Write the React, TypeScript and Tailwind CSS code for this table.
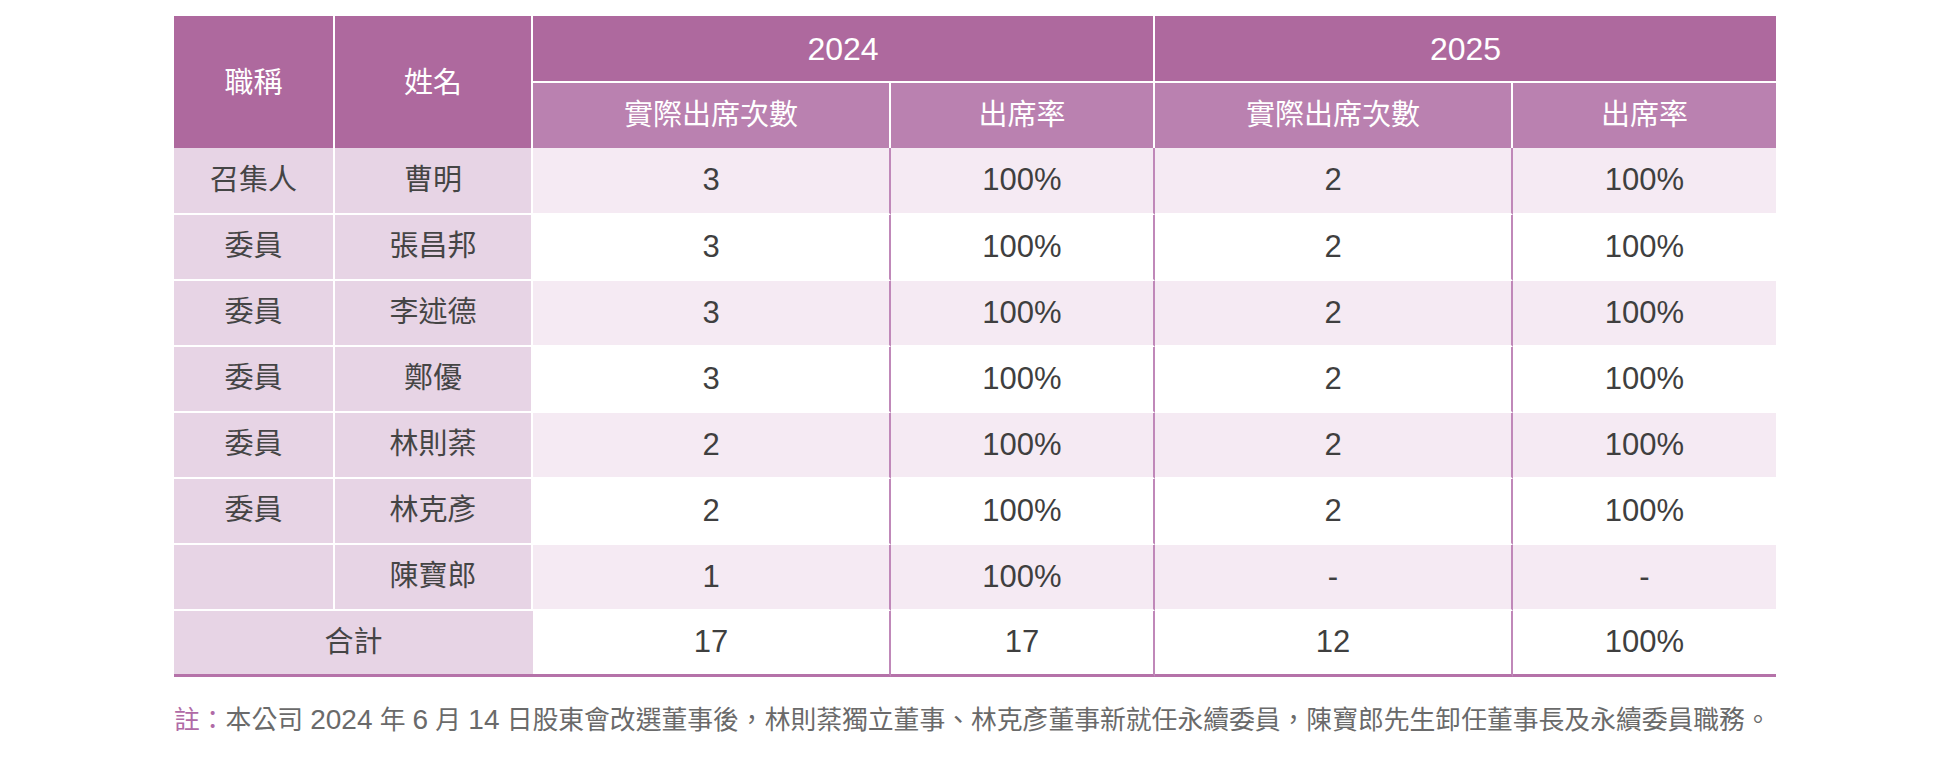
import React from 'react';

type Row = { title: string; name: string; c24: string; r24: string; c25: string; r25: string };

const rows: Row[] = [
    { title: '召集人', name: '曹明', c24: '3', r24: '100%', c25: '2', r25: '100%' },
    { title: '委員', name: '張昌邦', c24: '3', r24: '100%', c25: '2', r25: '100%' },
    { title: '委員', name: '李述德', c24: '3', r24: '100%', c25: '2', r25: '100%' },
    { title: '委員', name: '鄭優', c24: '3', r24: '100%', c25: '2', r25: '100%' },
    { title: '委員', name: '林則棻', c24: '2', r24: '100%', c25: '2', r25: '100%' },
    { title: '委員', name: '林克彥', c24: '2', r24: '100%', c25: '2', r25: '100%' },
    { title: '', name: '陳寶郎', c24: '1', r24: '100%', c25: '-', r25: '-' },
];

const font = "font-['Liberation_Sans','Noto_Sans_CJK_TC',sans-serif]";

const App: React.FC = () => {
    return (
        <div className={`w-[1954px] h-[772px] bg-white pl-[174px] pt-[16px] ${font}`}>
            <div className="grid w-[1602px] grid-cols-[161px_198px_358px_264px_358px_263px] text-center">
                {/* header */}
                <div className="row-span-2 flex items-center justify-center bg-[#ae699e] border-r-2 border-white pt-[3px] text-[29px] text-white">
                    職稱
                </div>
                <div className="row-span-2 flex items-center justify-center bg-[#ae699e] border-r-2 border-white pt-[3px] text-[29px] text-white">
                    姓名
                </div>
                <div className="col-span-2 h-[67px] flex items-center justify-center bg-[#ae699e] border-r-2 border-b-2 border-white text-[32px] text-white">
                    2024
                </div>
                <div className="col-span-2 h-[67px] flex items-center justify-center bg-[#ae699e] border-b-2 border-white text-[32px] text-white">
                    2025
                </div>
                <div className="h-[65px] flex items-center justify-center bg-[#ba81b0] border-r-2 border-white text-[29px] text-white">
                    實際出席次數
                </div>
                <div className="h-[65px] flex items-center justify-center bg-[#ba81b0] border-r-2 border-white text-[29px] text-white">
                    出席率
                </div>
                <div className="h-[65px] flex items-center justify-center bg-[#ba81b0] border-r-2 border-white text-[29px] text-white">
                    實際出席次數
                </div>
                <div className="h-[65px] flex items-center justify-center bg-[#ba81b0] text-[29px] text-white">出席率</div>

                {/* body */}
                {rows.map((r, i) => {
                    const h = i === 0 ? 'h-[67px]' : 'h-[66px]';
                    const bg = i % 2 === 0 ? 'bg-[#f5eaf3]' : 'bg-white';
                    return (
                        <React.Fragment key={r.name}>
                            <div className={`${h} flex items-center justify-center bg-[#e7d4e5] border-r-2 border-b-2 border-white text-[29px] text-[#454545]`}>
                                {r.title}
                            </div>
                            <div className={`${h} flex items-center justify-center bg-[#e7d4e5] border-r-2 border-b-2 border-white text-[29px] text-[#454545]`}>
                                {r.name}
                            </div>
                            <div className={`${h} ${bg} flex items-center justify-center border-r-2 border-r-[#c088b9] border-b-2 border-b-white text-[31px] text-[#3f3f3f]`}>
                                {r.c24}
                            </div>
                            <div className={`${h} ${bg} flex items-center justify-center border-r-2 border-r-[#c088b9] border-b-2 border-b-white text-[31px] text-[#3f3f3f]`}>
                                {r.r24}
                            </div>
                            <div className={`${h} ${bg} flex items-center justify-center border-r-2 border-r-[#c088b9] border-b-2 border-b-white text-[31px] text-[#3f3f3f]`}>
                                {r.c25}
                            </div>
                            <div className={`${h} ${bg} flex items-center justify-center border-b-2 border-b-white text-[31px] text-[#3f3f3f]`}>
                                {r.r25}
                            </div>
                        </React.Fragment>
                    );
                })}

                {/* total */}
                <div className="col-span-2 h-[66px] flex items-center justify-center bg-[#e7d4e5] border-b-[3px] border-[#b572a9] text-[29px] text-[#454545]">
                    合計
                </div>
                <div className="h-[66px] flex items-center justify-center bg-white border-r-2 border-r-[#c088b9] border-b-[3px] border-b-[#b572a9] text-[31px] text-[#3f3f3f]">
                    17
                </div>
                <div className="h-[66px] flex items-center justify-center bg-white border-r-2 border-r-[#c088b9] border-b-[3px] border-b-[#b572a9] text-[31px] text-[#3f3f3f]">
                    17
                </div>
                <div className="h-[66px] flex items-center justify-center bg-white border-r-2 border-r-[#c088b9] border-b-[3px] border-b-[#b572a9] text-[31px] text-[#3f3f3f]">
                    12
                </div>
                <div className="h-[66px] flex items-center justify-center bg-white border-b-[3px] border-b-[#b572a9] text-[31px] text-[#3f3f3f]">
                    100%
                </div>
            </div>

            <p className="mt-[25px] text-[25.8px] leading-[36px] text-[#6a6a6a]">
                <span className="text-[#b06aa6]">註：</span>本公司 <span className="text-[28px]">2024</span> 年{' '}
                <span className="text-[28px]">6</span> 月 <span className="text-[28px]">14</span>{' '}
                日股東會改選董事後，林則棻獨立董事、林克彥董事新就任永續委員，陳寶郎先生卸任董事長及永續委員職務。
            </p>
        </div>
    );
};

export default App;
